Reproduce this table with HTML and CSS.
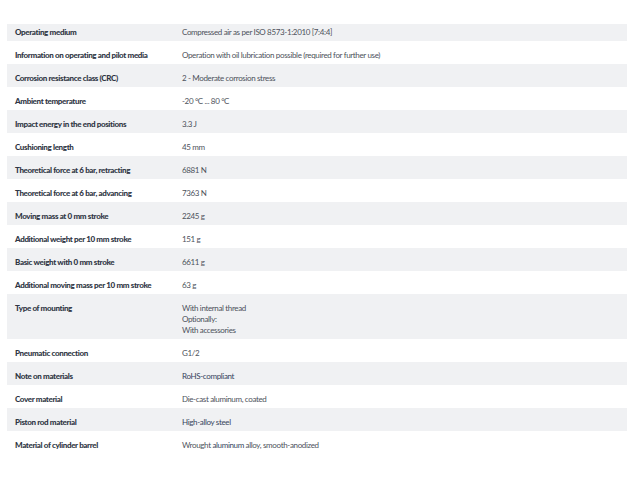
FILE: index.html
```html
<!DOCTYPE html>
<html lang="en">
<head>
    <meta charset="UTF-8">
    <meta name="viewport" content="width=device-width, initial-scale=1.0">
    <title>Technical data</title>
    <link rel="stylesheet" href="styles.css">
</head>
<body>
    <div class="tech-data">
        <table class="spec-table">
            <tbody>
                <tr><th>Operating medium</th><td>Compressed air as per ISO 8573-1:2010 [7:4:4]</td></tr>
                <tr><th>Information on operating and pilot media</th><td>Operation with oil lubrication possible (required for further use)</td></tr>
                <tr><th>Corrosion resistance class (CRC)</th><td>2 - Moderate corrosion stress</td></tr>
                <tr><th>Ambient temperature</th><td>-20 °C ... 80 °C</td></tr>
                <tr><th>Impact energy in the end positions</th><td>3.3 J</td></tr>
                <tr><th>Cushioning length</th><td>45 mm</td></tr>
                <tr><th>Theoretical force at 6 bar, retracting</th><td>6881 N</td></tr>
                <tr><th>Theoretical force at 6 bar, advancing</th><td>7363 N</td></tr>
                <tr><th>Moving mass at 0 mm stroke</th><td>2245 g</td></tr>
                <tr><th>Additional weight per 10 mm stroke</th><td>151 g</td></tr>
                <tr><th>Basic weight with 0 mm stroke</th><td>6611 g</td></tr>
                <tr><th>Additional moving mass per 10 mm stroke</th><td>63 g</td></tr>
                <tr><th>Type of mounting</th><td>With internal thread<br>Optionally:<br>With accessories</td></tr>
                <tr><th>Pneumatic connection</th><td>G1/2</td></tr>
                <tr><th>Note on materials</th><td><span class="term">RoHS-compliant</span></td></tr>
                <tr><th>Cover material</th><td>Die-cast aluminum, coated</td></tr>
                <tr><th>Piston rod material</th><td><span class="term">High-alloy steel</span></td></tr>
                <tr><th>Material of cylinder barrel</th><td>Wrought <span class="term">aluminum</span> alloy, smooth-anodized</td></tr>
            </tbody>
        </table>
    </div>
</body>
</html>
```

FILE: styles.css
```css
* {
    margin: 0;
    padding: 0;
    box-sizing: border-box;
}

body {
    font-family: Lato, sans-serif;
    background: #fff;
}

.tech-data {
    padding: 24px 13px 0 7px;
}

.spec-table {
    width: 100%;
    border-collapse: collapse;
    font-size: 8px;
    line-height: 11px;
    letter-spacing: -0.35px;
}

.spec-table tr:nth-child(odd) {
    background: #f0f1f3;
}

.spec-table th,
.spec-table td {
    text-align: left;
    vertical-align: top;
    padding: 9px 8px 3px;
}

.spec-table tr:first-child th,
.spec-table tr:first-child td {
    padding-top: 3px;
    padding-bottom: 3px;
}

.spec-table th {
    width: 167px;
    font-weight: 900;
    color: #2f3644;
}

.spec-table td {
    color: #4d525b;
}

.spec-table .term {
    color: #36445c;
}
```
